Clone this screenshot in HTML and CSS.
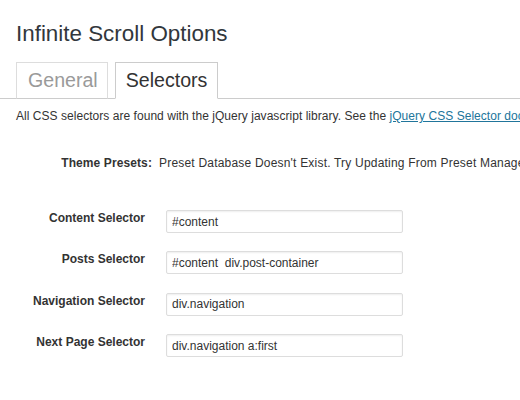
FILE: index.html
```html
<!DOCTYPE html>
<html lang="en">
<head>
  <meta charset="UTF-8" />
  <title>Infinite Scroll Options</title>
  <link rel="stylesheet" href="styles.css">
</head>
<body>
  <div class="wrap">
    <h2 class="page-title">Infinite Scroll Options</h2>

    <nav class="tabs">
      <a href="#" class="tab">General</a>
      <a href="#" class="tab tab-active">Selectors</a>
    </nav>

    <p class="intro">All CSS selectors are found with the jQuery javascript library. See the <a href="#">jQuery CSS Selector documentation</a> for an overview of all possibilities.</p>

    <div class="presets">
      <span class="presets-label">Theme Presets:</span>
      <span class="presets-value">Preset Database Doesn't Exist. Try Updating From Preset Manager.</span>
    </div>

    <table class="form-table">
      <tr>
        <th>Content Selector</th>
        <td><input type="text" class="field" value="#content"></td>
      </tr>
      <tr>
        <th>Posts Selector</th>
        <td><input type="text" class="field" value="#content  div.post-container"></td>
      </tr>
      <tr>
        <th>Navigation Selector</th>
        <td><input type="text" class="field" value="div.navigation"></td>
      </tr>
      <tr>
        <th>Next Page Selector</th>
        <td><input type="text" class="field" value="div.navigation a:first"></td>
      </tr>
    </table>
  </div>
</body>
</html>
```

FILE: styles.css
```css
html, body {
  margin: 0;
  padding: 0;
  background: #fff;
  font-family: "Liberation Sans", Arial, sans-serif;
  color: #333;
  overflow: hidden;
}

.wrap {
  padding: 0 0 0 16px;
  white-space: nowrap;
}

.page-title {
  margin: 0;
  padding: 20px 0 0;
  font-size: 22.4px;
  font-weight: normal;
  line-height: 28px;
  color: #32373c;
}

/* Tabs */
.tabs {
  display: flex;
  gap: 7px;
  margin: 14px 0 0 -16px;
  padding-left: 16px;
  border-bottom: 1px solid #ccc;
}
.tab {
  display: block;
  padding: 5px 9px 5px 11px;
  margin-bottom: -1px;
  border: 1px solid #ddd;
  border-bottom-color: #ccc;
  font-size: 19.6px;
  line-height: 24px;
  color: #9a9a9a;
  text-decoration: none;
  background: #fff;
}
.tab-active {
  padding: 5px 10px 6px 10px;
  color: #333;
  border-color: #ccc;
  border-bottom-color: #fff;
}

.intro {
  margin: 9px 0 0;
  font-size: 12px;
  line-height: 16px;
  letter-spacing: 0.04px;
  color: #333;
}
.intro a {
  color: #21759b;
}

/* Presets */
.presets {
  display: flex;
  margin-top: 31px;
  font-size: 12px;
  line-height: 16px;
}
.presets-label {
  flex-shrink: 0;
  width: 136px;
  text-align: right;
  font-weight: bold;
  color: #333;
  letter-spacing: 0.1px;
}
.presets-value {
  padding-left: 7px;
  letter-spacing: 0.2px;
  color: #333;
}

/* Selector fields */
.form-table {
  margin-top: 39px;
  border-collapse: collapse;
}
.form-table th {
  width: 129px;
  padding: 0 21px 0 0;
  text-align: right;
  vertical-align: top;
  font-size: 12px;
  line-height: 16px;
  font-weight: bold;
  color: #333;
  height: 41.4px;
}
.form-table td {
  padding: 0;
  vertical-align: top;
}
.field {
  box-sizing: border-box;
  width: 237px;
  height: 23px;
  margin: 0;
  padding: 2px 5px;
  border: 1px solid #ddd;
  border-radius: 2px;
  font-family: "Liberation Sans", Arial, sans-serif;
  font-size: 12px;
  color: #333;
  box-shadow: inset 0 1px 2px rgba(0,0,0,0.07);
}
```
